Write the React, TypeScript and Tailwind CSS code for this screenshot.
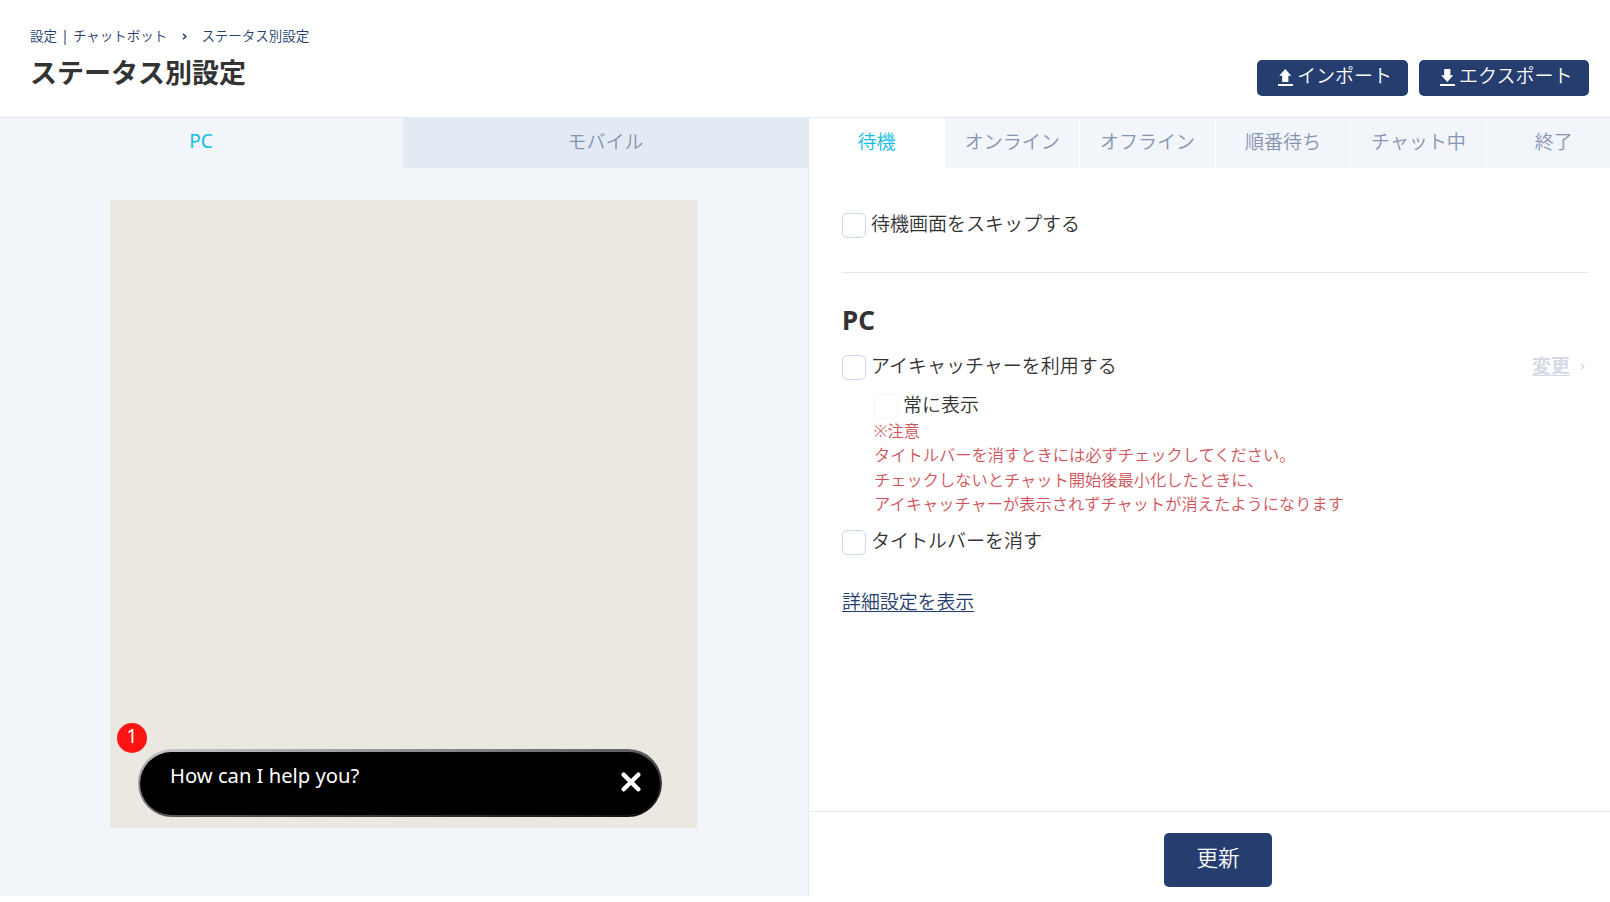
import type { ReactNode } from 'react'

const previewTabs = ['PC', 'モバイル']
const statusTabs = ['待機', 'オンライン', 'オフライン', '順番待ち', 'チャット中', '終了']

function Checkbox({ label, disabled = false }: { label: string; disabled?: boolean }) {
  return (
    <label className="flex h-[25px] items-start">
      <span
        className={
          disabled
            ? 'h-[25px] w-6 shrink-0 rounded-[5px] border border-[#f6f7fb] bg-white'
            : 'h-[25px] w-6 shrink-0 rounded-[5px] border border-[#cbd7ec] bg-white'
        }
      />
      <span className="ml-[5px] leading-[22px] whitespace-nowrap">{label}</span>
    </label>
  )
}

function HeaderButton({ icon, className, children }: { icon: ReactNode; className: string; children: ReactNode }) {
  return (
    <button className={`flex h-9 rounded-[5px] bg-[#263d70] pl-[21px] text-white ${className}`}>
      {icon}
      <span className="leading-[32px] whitespace-nowrap">{children}</span>
    </button>
  )
}

export default function App() {
  return (
    <div
      lang="ja"
      className="flex h-[902px] w-[1610px] flex-col overflow-hidden bg-white text-[19px] font-[350] text-[#333] [font-family:'Noto_Sans','Noto_Sans_CJK_JP',sans-serif]"
    >
      <header className="flex h-[118px] shrink-0 items-start justify-between border-b border-[#e3e9f3] pr-[21px] pl-[30px]">
        <div className="pt-[26px]">
          <nav className="flex h-5 items-center text-[13.5px] leading-5 text-[#263d70]">
            <span>設定</span>
            <span className="w-4 text-center font-normal">|</span>
            <span>チャットボット</span>
            <svg className="ml-[15px] h-[7px] w-[5px]" viewBox="0 0 5 7" fill="none" stroke="currentColor" strokeWidth="1.5">
              <path d="M1 .7 3.8 3.5 1 6.3" />
            </svg>
            <span className="ml-[14px]">ステータス別設定</span>
          </nav>
          <h1 className="mt-[7px] text-[27px] leading-10 font-bold">ステータス別設定</h1>
        </div>
        <div className="flex gap-[11px] pt-[60px]">
          <HeaderButton
            className="w-[151px]"
            icon={
              <svg className="mt-[9px] mr-1 h-[17px] w-[15px]" viewBox="0 0 15 17" fill="currentColor">
                <path d="M7.3 0 13.3 6.7h-2.9V13H4.2V6.7H1.2zM0 15h15v2H0z" />
              </svg>
            }
          >
            インポート
          </HeaderButton>
          <HeaderButton
            className="w-[170px]"
            icon={
              <svg className="mt-[9px] mr-1 h-[17px] w-[15px]" viewBox="0 0 15 17" fill="currentColor">
                <path d="M4.2 0h6.2v6.3h2.9L7.3 13 1.2 6.3h3zM0 15h15v2H0z" />
              </svg>
            }
          >
            エクスポート
          </HeaderButton>
        </div>
      </header>

      <main className="flex h-[778px] shrink-0">
        {/* プレビュー */}
        <section className="flex w-[809px] shrink-0 flex-col border-r border-[#e3e9f3] bg-[#f2f5fa]">
          <div className="flex h-[50px] shrink-0 text-center leading-[47px]">
            <button className="w-[403px] pr-[1px] pb-[3px] font-normal text-[#12bde9]">{previewTabs[0]}</button>
            <button className="flex-1 bg-[#e3eaf4] pb-[2px] text-[#8594b2]">{previewTabs[1]}</button>
          </div>
          <div className="relative mt-8 ml-[110px] flex h-[628px] w-[587px] flex-col justify-end bg-[#ebe8e1] pb-[11px] pl-7">
            <div className="flex h-[68px] w-[524px] rounded-[34px] bg-[linear-gradient(to_bottom_right,#cccccc,#5c5c5c_50%,#100c0c)] px-[2px] pt-[3px] pb-[2px]">
              <div className="flex flex-1 justify-between rounded-[32px] bg-black pr-[19px] pl-[30px] text-white">
                <span className="mt-[10px] text-[20.2px] leading-[26px] font-normal">How can I help you?</span>
                <svg className="mt-5 h-5 w-5" viewBox="0 0 20 20" stroke="currentColor" strokeWidth="4.4" strokeLinecap="round">
                  <path d="m2.7 2.7 14.6 14.6M17.3 2.7 2.7 17.3" />
                </svg>
              </div>
            </div>
            <span className="absolute top-[523px] left-[7px] h-[30px] w-[30px] rounded-full bg-[#ff1414] text-center leading-[27px] font-normal text-white">
              1
            </span>
          </div>
        </section>

        {/* ステータスごとの設定 */}
        <section className="flex w-[801px] flex-col">
          <div className="flex h-[50px] w-[813px] shrink-0 text-center leading-[47px]">
            {statusTabs.map((tab, i) => (
              <button
                key={tab}
                className={
                  i === 0
                    ? 'w-[136px] shrink-0 bg-white pr-[1px] pb-[2px] text-[#12bde9]'
                    : 'w-[135.4px] shrink-0 border-r border-white bg-[#f2f5fa] pb-[2px] text-[#8594b2]'
                }
              >
                {tab}
              </button>
            ))}
          </div>

          <div className="h-[643px] shrink-0 pr-[21px] pl-[33px]">
            <div className="h-[105px] border-b border-[#e3e9f3] pt-[45px]">
              <Checkbox label="待機画面をスキップする" />
            </div>
            <h2 className="mt-[31px] text-[26px] leading-8 font-bold">PC</h2>
            <div className="mt-[19px] flex items-start justify-between">
              <Checkbox label="アイキャッチャーを利用する" />
              <a className="mr-[4px] flex items-center font-bold text-[#d4dae5]">
                <span className="leading-[22px] underline decoration-1 underline-offset-2">変更</span>
                <svg className="ml-[10px] h-[7px] w-[5px]" viewBox="0 0 5 7" fill="none" stroke="currentColor" strokeWidth="1.6">
                  <path d="M1 .7 3.8 3.5 1 6.3" />
                </svg>
              </a>
            </div>
            <div className="mt-[14px] pl-8">
              <Checkbox label="常に表示" disabled />
              <p className="text-[16.25px] leading-[24.3px] whitespace-nowrap text-[#d35259]">
                ※注意
                <br />
                タイトルバーを消すときには必ずチェックしてください。
                <br />
                チェックしないとチャット開始後最小化したときに、
                <br />
                アイキャッチャーが表示されずチャットが消えたようになります
              </p>
            </div>
            <div className="mt-[14px]">
              <Checkbox label="タイトルバーを消す" />
            </div>
            <a className="mt-[33px] block text-[18.9px] leading-7 text-[#263d70] underline decoration-1 underline-offset-2">詳細設定を表示</a>
          </div>

          <footer className="flex flex-1 items-start border-t border-[#e3e9f3] pt-[21px] pl-[355px]">
            <button className="h-[54px] w-[108px] rounded-[5px] bg-[#263d70] text-[21.6px] leading-[50px] text-white">
              <span className="block h-full">更新</span>
            </button>
          </footer>
        </section>
      </main>
    </div>
  )
}
